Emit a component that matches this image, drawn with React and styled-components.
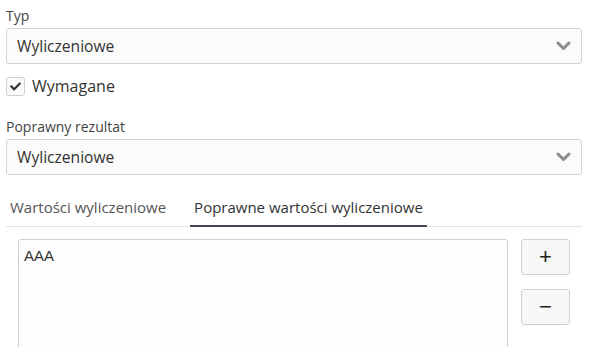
import styled, { createGlobalStyle } from "styled-components";
import { FaCheck } from "react-icons/fa";

const GlobalStyle = createGlobalStyle`
  body {
    margin: 0;
    background: #ffffff;
    font-family: "Open Sans", "Noto Sans", sans-serif;
    color: #333333;
  }
`;

function Chevron() {
  return (
    <svg width="15" height="10" viewBox="0 0 15 10">
      <path
        d="M2 2 L7.5 7.5 L13 2"
        fill="none"
        stroke="#8c8c8c"
        strokeWidth="3"
        strokeLinecap="round"
        strokeLinejoin="round"
      />
    </svg>
  );
}

function Select({ value }) {
  return (
    <SelectBox>
      <span>{value}</span>
      <Chevron />
    </SelectBox>
  );
}

export default function App() {
  return (
    <Page>
      <GlobalStyle />
      <Label>Typ</Label>
      <Select value="Wyliczeniowe" />
      <CheckRow>
        <CheckBox>
          <FaCheck size={11} color="#333" />
        </CheckBox>
        <span>Wymagane</span>
      </CheckRow>
      <Label>Poprawny rezultat</Label>
      <Select value="Wyliczeniowe" />
      <Tabs>
        <Tab>Wartości wyliczeniowe</Tab>
        <Tab active>Poprawne wartości wyliczeniowe</Tab>
      </Tabs>
      <Editor>
        <TextArea defaultValue="AAA" />
        <Buttons>
          <IconButton>+</IconButton>
          <IconButton>−</IconButton>
        </Buttons>
      </Editor>
    </Page>
  );
}

const Page = styled.div`
  padding: 6px 7px 0 6px;
  display: flex;
  flex-direction: column;
  height: 347px;
  box-sizing: border-box;
  overflow: hidden;
`;

const Label = styled.div`
  font-size: 14px;
  line-height: 19px;
  color: #444;
  margin-bottom: 3px;
`;

const SelectBox = styled.div`
  box-sizing: border-box;
  height: 36px;
  flex-shrink: 0;
  border: 1px solid #d4d4d4;
  border-radius: 3px;
  background: #fbfbfb;
  display: flex;
  align-items: center;
  justify-content: space-between;
  padding: 0 10px 0 10px;
  font-size: 15.6px;
  color: #333;
`;

const CheckRow = styled.div`
  display: flex;
  align-items: center;
  gap: 7px;
  margin: 11px 0 20px;
  font-size: 16px;
  color: #333;
`;

const CheckBox = styled.div`
  box-sizing: border-box;
  width: 19px;
  height: 19px;
  border: 1px solid #cfcfcf;
  border-radius: 3px;
  background: #fafafa;
  display: flex;
  align-items: center;
  justify-content: center;
`;

const Tabs = styled.div`
  display: flex;
  gap: 20px;
  margin-top: 18px;
  border-bottom: 1px solid #e2e2e2;
`;

const Tab = styled.div`
  padding: 3px 4px 0;
  height: 34px;
  box-sizing: border-box;
  font-size: 15px;
  line-height: 22px;
  color: ${(p) => (p.active ? "#333" : "#555")};
  border-bottom: 2px solid ${(p) => (p.active ? "#44475a" : "transparent")};
  margin-bottom: -1px;
`;

const Editor = styled.div`
  display: flex;
  gap: 13px;
  padding-left: 12px;
  margin-top: 12px;
`;

const TextArea = styled.textarea`
  box-sizing: border-box;
  width: 490px;
  height: 130px;
  border: 1px solid #cfcfcf;
  border-radius: 3px;
  background: #fdfdfd;
  padding: 7px 5px;
  font-family: "Liberation Sans", Arial, sans-serif;
  font-size: 15px;
  color: #333;
  resize: none;
  outline: none;
`;

const Buttons = styled.div`
  display: flex;
  flex-direction: column;
  gap: 14px;
`;

const IconButton = styled.button`
  box-sizing: border-box;
  width: 49px;
  height: 36px;
  border: 1px solid #d0d0d0;
  border-radius: 3px;
  background: #f7f7f7;
  font-family: "Liberation Sans", Arial, sans-serif;
  font-size: 22px;
  color: #222;
  display: flex;
  align-items: center;
  justify-content: center;
  padding: 0;
`;
